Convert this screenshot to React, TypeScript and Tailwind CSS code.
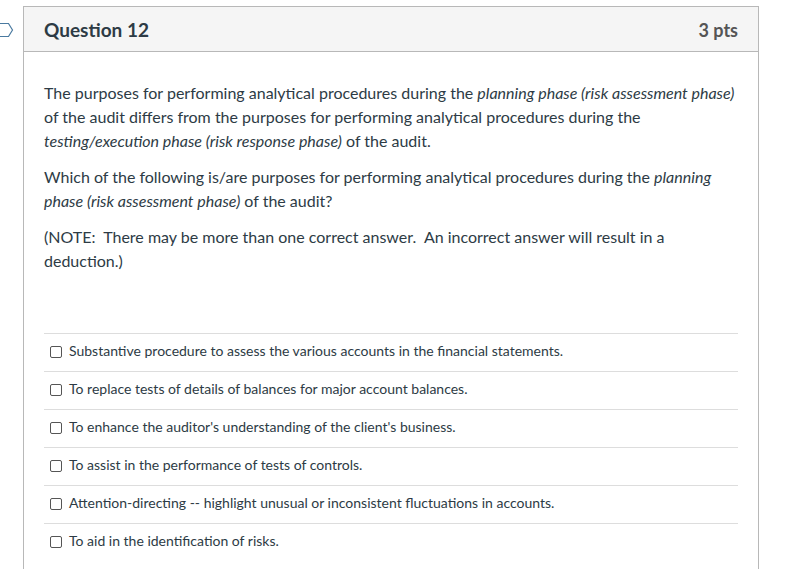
const answers = [
  "Substantive procedure to assess the various accounts in the financial statements.",
  "To replace tests of details of balances for major account balances.",
  "To enhance the auditor's understanding of the client's business.",
  "To assist in the performance of tests of controls.",
  "Attention-directing -- highlight unusual or inconsistent fluctuations in accounts.",
  "To aid in the identification of risks.",
];

export default function App() {
  return (
    <div
      className="relative h-[569px] w-[788px] overflow-hidden bg-white text-[#2d3b45]"
      style={{ fontFamily: "Lato, 'Noto Sans', sans-serif" }}
    >
      {/* flag marker */}
      <svg className="absolute left-[-4px] top-[22px]" width="18" height="16" viewBox="0 0 18 16">
        <path d="M0.5 1.5 H12.5 L16.5 8 L12.5 14.5 H0.5" fill="none" stroke="#4a7aa0" strokeWidth="1.2" />
      </svg>

      <div className="ml-[23px] mt-[6px] w-[736px] border border-[#b8b8b8]">
        {/* Header */}
        <div className="flex h-[45px] items-center justify-between border-b border-[#b8b8b8] bg-[#f5f5f5] px-[20px] pt-[2px]">
          <h2 className="text-[19px] font-bold">Question 12</h2>
          <span className="text-[18px] font-bold text-[#555]">3 pts</span>
        </div>

        {/* Body */}
        <div className="px-[20px] pb-[40px] pt-[29px] text-[16px] leading-[24px]">
          <p className="mb-[12px]">
            The purposes for performing analytical procedures during the <em>planning phase (risk assessment phase)</em> of
            the audit differs from the purposes for performing analytical procedures during the{" "}
            <em>testing/execution phase (risk response phase)</em> of the audit.
          </p>
          <p className="mb-[12px]">
            Which of the following is/are purposes for performing analytical procedures during the <em>planning phase (risk assessment phase)</em> of the audit?
          </p>
          <p className="mb-[12px] pr-[60px]">
            (NOTE:&nbsp; There may be more than one correct answer.&nbsp; An incorrect answer will result in a deduction.)
          </p>

          <div className="mt-[60px]">
            {answers.map((a) => (
              <div key={a} className="flex h-[38px] items-center border-t border-[#dddddd] pb-[3px] pl-[6px] text-[14px]">
                <span className="mr-[7px] mt-[2px] h-[12px] w-[12px] shrink-0 rounded-[2px] border border-[#555]" />
                <span>{a}</span>
              </div>
            ))}
          </div>
        </div>
      </div>
    </div>
  );
}
